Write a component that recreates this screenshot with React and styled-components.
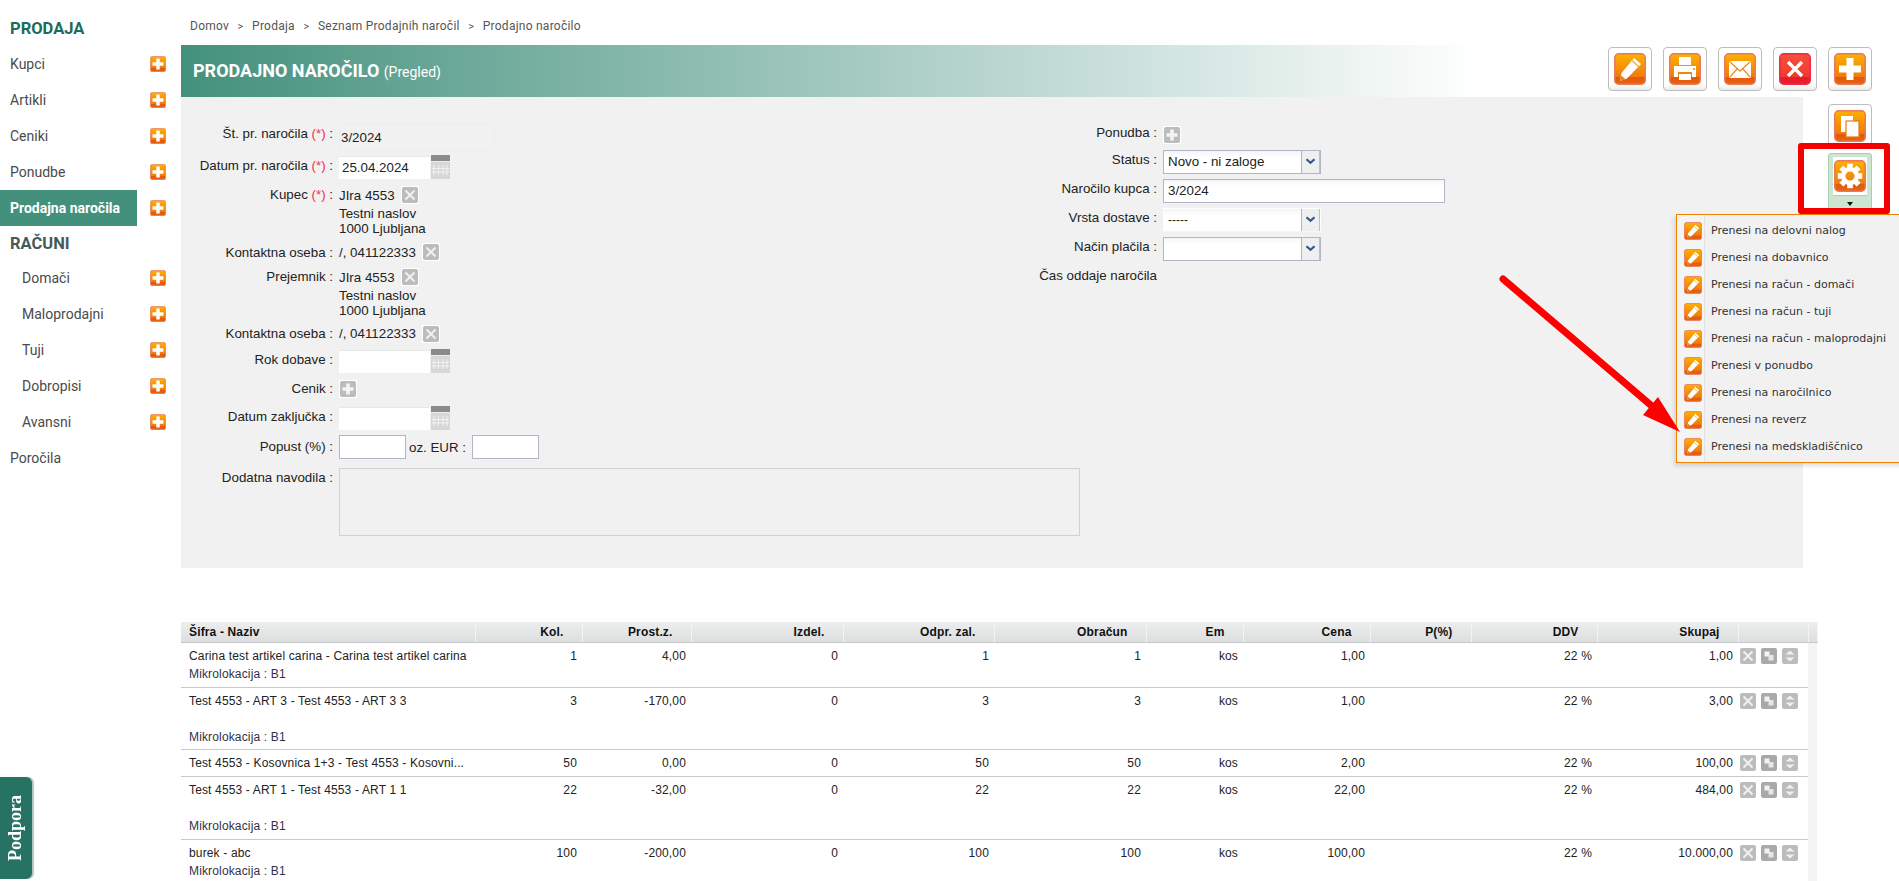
import { useId } from 'react';
import styled, { createGlobalStyle } from 'styled-components';

const GlobalStyle = createGlobalStyle`
  html, body {
    margin: 0;
    height: 100%;
    overflow: hidden;
    background: #fff;
  }
  body {
    font-family: "Liberation Sans", Arial, sans-serif;
    font-size: 12px;
    color: #222;
  }
`;

const glyphs = {
  pencil: (
    <>
      <path d="M20 5l7 6-14 14.500-7 2.500 1.500-8z" fill="#fff" />
      <path d="M18 7.500l6.500 6" stroke="#f3a63a" strokeWidth="1.300" fill="none" />
      <path d="M6 28l1.200-5.500 4.300 3.800z" fill="#e8821c" />
    </>
  ),
  print: (
    <>
      <rect x="10" y="4" width="12" height="8" fill="#fff" />
      <path d="M5 13h22v11h-4v-5H9v5H5z" fill="#fff" />
      <rect x="10" y="21" width="12" height="6" fill="#fff" />
      <rect x="24" y="15" width="2" height="2" fill="#f0a050" />
    </>
  ),
  mail: (
    <>
      <rect x="5" y="8" width="22" height="17" fill="#fff" />
      <path d="M5.500 8.500L16 18 26.500 8.500M5.500 24.500l7.500-8.500M26.500 24.500L19 16" stroke="#f0902a" strokeWidth="1.300" fill="none" />
    </>
  ),
  close: <path d="M9 9l14 14M23 9L9 23" stroke="#fff" strokeWidth="3.200" fill="none" />,
  plus: <path d="M12.500 5h7v7.500H27v7h-7.500V27h-7v-7.500H5v-7h7.500z" fill="#fff" />,
  copy: (
    <>
      <rect x="7" y="6" width="12" height="16" fill="#fff" />
      <rect x="12" y="11" width="13" height="16" fill="#fff" stroke="#e87a10" strokeWidth="1.200" />
    </>
  ),
  gear: (
    <>
      {[0, 45, 90, 135, 180, 225, 270, 315].map((angle) => (
        <rect key={angle} x="13.200" y="3.800" width="5.600" height="6" fill="#fff" transform={`rotate(${angle} 16 16)`} />
      ))}
      <circle cx="16" cy="16" r="6.800" fill="none" stroke="#fff" strokeWidth="4.500" />
    </>
  ),
};

const OrangeIcon = ({ glyph, size = 32, red }) => {
  const id = useId();
  return (
    <svg width={size} height={size} viewBox="0 0 32 32" style={{ display: 'block', flex: 'none' }}>
      <defs>
        <linearGradient id={id} x1="0" y1="0" x2="0" y2="1">
          <stop offset="0" stopColor={red ? '#f5503c' : '#ffb000'} />
          <stop offset="0.76" stopColor={red ? '#f03a2e' : '#f07a0c'} />
          <stop offset="0.77" stopColor={red ? '#e81c2c' : '#e2580c'} />
          <stop offset="1" stopColor={red ? '#e81c34' : '#e8640e'} />
        </linearGradient>
      </defs>
      <rect x="0.750" y="0.750" width="30.500" height="30.500" rx="4" fill={`url(#${id})`} stroke={red ? '#f02848' : '#e8795c'} strokeWidth="1.500" />
      {glyphs[glyph]}
    </svg>
  );
};

const GrayIcon = ({ kind }) => (
  <GrayBox>
    <svg width="16" height="16" viewBox="0 0 16 16" style={{ display: 'block' }}>
      <rect width="16" height="16" rx="2" fill={kind === 'copy' ? '#a9a9a9' : '#bcbcbc'} />
      {kind === 'x' && <path d="M3.500 3.500l9 9M12.500 3.500l-9 9" stroke="#f0f0f0" strokeWidth="2" />}
      {kind === 'plus' && <path d="M6.200 2.500h3.600v3.700h3.700v3.600H9.800v3.700H6.200V9.800H2.500V6.200h3.700z" fill="#f4f4f4" />}
      {kind === 'copy' && (
        <>
          <rect x="3.500" y="3.500" width="5" height="5" fill="#f4f4f4" />
          <rect x="7.500" y="7" width="5" height="5.500" fill="#e6e6e6" />
        </>
      )}
      {kind === 'sort' && (
        <>
          <path d="M8 2.500l4.500 4h-9zM8 13.500l-4.500-4h9z" fill="#f0f0f0" />
        </>
      )}
    </svg>
  </GrayBox>
);

const Calendar = () => (
  <CalendarBox>
    <svg width="19" height="24" viewBox="0 0 19 24" style={{ display: 'block' }}>
      <rect width="19" height="24" fill="#d6d8d6" />
      <rect width="19" height="6" fill="#8b8b8b" />
      <rect y="6" width="19" height="1" fill="#ededed" />
      <path d="M3 10v10M7.500 10v10M12 10v10M16 10v10M1 13.500h17M1 17h17" stroke="#f1f1f1" strokeWidth="1" />
    </svg>
  </CalendarBox>
);

const Chevron = () => (
  <SelectArrow>
    <svg width="11" height="7" viewBox="0 0 11 7">
      <path d="M1.500 1.200l4 3.600 4-3.600" fill="none" stroke="#34558f" strokeWidth="2.200" />
    </svg>
  </SelectArrow>
);

const salesLinks = [
  { label: 'Kupci' },
  { label: 'Artikli' },
  { label: 'Ceniki' },
  { label: 'Ponudbe' },
  { label: 'Prodajna naročila', active: true },
];
const invoiceLinks = ['Domači', 'Maloprodajni', 'Tuji', 'Dobropisi', 'Avansni'];

const transferItems = [
  'Prenesi na delovni nalog',
  'Prenesi na dobavnico',
  'Prenesi na račun - domači',
  'Prenesi na račun - tuji',
  'Prenesi na račun - maloprodajni',
  'Prenesi v ponudbo',
  'Prenesi na naročilnico',
  'Prenesi na reverz',
  'Prenesi na medskladiščnico',
];

const columns = [
  { label: 'Šifra - Naziv', width: 294, left: true },
  { label: 'Kol.', width: 107 },
  { label: 'Prost.z.', width: 109 },
  { label: 'Izdel.', width: 152 },
  { label: 'Odpr. zal.', width: 151 },
  { label: 'Obračun', width: 152 },
  { label: 'Em', width: 97 },
  { label: 'Cena', width: 127 },
  { label: 'P(%)', width: 101 },
  { label: 'DDV', width: 126 },
  { label: 'Skupaj', width: 141 },
];

const rows = [
  { name: 'Carina test artikel carina - Carina test artikel carina', gap: false, cells: ['1', '4,00', '0', '1', '1', 'kos', '1,00', '', '22 %', '1,00'], height: 45 },
  { name: 'Test 4553 - ART 3 - Test 4553 - ART 3 3', gap: true, cells: ['3', '-170,00', '0', '3', '3', 'kos', '1,00', '', '22 %', '3,00'], height: 62 },
  { name: 'Test 4553 - Kosovnica 1+3 - Test 4553 - Kosovni...', single: true, cells: ['50', '0,00', '0', '50', '50', 'kos', '2,00', '', '22 %', '100,00'], height: 27 },
  { name: 'Test 4553 - ART 1 - Test 4553 - ART 1 1', gap: true, cells: ['22', '-32,00', '0', '22', '22', 'kos', '22,00', '', '22 %', '484,00'], height: 63 },
  { name: 'burek - abc', gap: false, cells: ['100', '-200,00', '0', '100', '100', 'kos', '100,00', '', '22 %', '10.000,00'], height: 45 },
];

const App = () => (
  <Page>
    <GlobalStyle />
    <Sidebar>
      <SideHeading>PRODAJA</SideHeading>
      {salesLinks.map((link) => (
        <SideRow key={link.label}>
          <SideLink $active={link.active}>{link.label}</SideLink>
          <OrangeIcon glyph="plus" size={16} />
        </SideRow>
      ))}
      <SideHeading $muted>RAČUNI</SideHeading>
      {invoiceLinks.map((label) => (
        <SideRow key={label}>
          <SideLink $nested>{label}</SideLink>
          <OrangeIcon glyph="plus" size={16} />
        </SideRow>
      ))}
      <SideRow>
        <SideLink>Poročila</SideLink>
      </SideRow>
    </Sidebar>

    <Main>
      <Breadcrumb>
        <span>Domov</span>
        <Sep>&gt;</Sep>
        <span>Prodaja</span>
        <Sep>&gt;</Sep>
        <span>Seznam Prodajnih naročil</span>
        <Sep>&gt;</Sep>
        <span>Prodajno naročilo</span>
      </Breadcrumb>

      <TitleBar>
        <Title>
          PRODAJNO NAROČILO <small>(Pregled)</small>
        </Title>
        <Toolbar>
          <ToolButton><OrangeIcon glyph="pencil" /></ToolButton>
          <ToolButton><OrangeIcon glyph="print" /></ToolButton>
          <ToolButton><OrangeIcon glyph="mail" /></ToolButton>
          <ToolButton><OrangeIcon glyph="close" red /></ToolButton>
          <ToolButton><OrangeIcon glyph="plus" /></ToolButton>
        </Toolbar>
      </TitleBar>

      <Middle>
        <Panel>
          <FormLeft>
            <FormRow $h={30}>
              <Label $lift={8}>Št. pr. naročila <Req>(*)</Req> :</Label>
              <StaticValue>3/2024</StaticValue>
            </FormRow>
            <FormRow $h={30}>
              <Label $lift={4}>Datum pr. naročila <Req>(*)</Req> :</Label>
              <DateField><DateInput readOnly value="25.04.2024" /><Calendar /></DateField>
            </FormRow>
            <FormRow $h={58} $top>
              <Label $drop={5}>Kupec <Req>(*)</Req> :</Label>
              <Address>
                <AddressLine>JIra 4553 <GrayIcon kind="x" /></AddressLine>
                <div>Testni naslov</div>
                <div>1000 Ljubljana</div>
              </Address>
            </FormRow>
            <FormRow $h={24}>
              <Label>Kontaktna oseba :</Label>
              <AddressLine>/, 041122333 <GrayIcon kind="x" /></AddressLine>
            </FormRow>
            <FormRow $h={57} $top>
              <Label $drop={5}>Prejemnik :</Label>
              <Address>
                <AddressLine>JIra 4553 <GrayIcon kind="x" /></AddressLine>
                <div>Testni naslov</div>
                <div>1000 Ljubljana</div>
              </Address>
            </FormRow>
            <FormRow $h={25}>
              <Label>Kontaktna oseba :</Label>
              <AddressLine>/, 041122333 <GrayIcon kind="x" /></AddressLine>
            </FormRow>
            <FormRow $h={30}>
              <Label $lift={4}>Rok dobave :</Label>
              <DateField><DateInput readOnly value="" /><Calendar /></DateField>
            </FormRow>
            <FormRow $h={26}>
              <Label $lift={2}>Cenik :</Label>
              <GrayIcon kind="plus" />
            </FormRow>
            <FormRow $h={32}>
              <Label $lift={4}>Datum zaključka :</Label>
              <DateField><DateInput readOnly value="" /><Calendar /></DateField>
            </FormRow>
            <FormRow $h={26}>
              <Label $lift={2}>Popust (%) :</Label>
              <SmallInput readOnly value="" />
              <InlineText>oz. EUR :</InlineText>
              <SmallInput readOnly value="" />
            </FormRow>
            <NotesRow>
              <Label $drop={2}>Dodatna navodila :</Label>
              <Notes readOnly value="" />
            </NotesRow>
          </FormLeft>

          <FormRight>
            <RightRow $h={25}>
              <RightLabel>Ponudba :</RightLabel>
              <GrayIcon kind="plus" />
            </RightRow>
            <RightRow $h={29}>
              <RightLabel>Status :</RightLabel>
              <SelectBox>Novo - ni zaloge<Chevron /></SelectBox>
            </RightRow>
            <RightRow $h={29}>
              <RightLabel>Naročilo kupca :</RightLabel>
              <WideInput readOnly value="3/2024" />
            </RightRow>
            <RightRow $h={29}>
              <RightLabel>Vrsta dostave :</RightLabel>
              <SelectBox $plain>-----<Chevron /></SelectBox>
            </RightRow>
            <RightRow $h={29}>
              <RightLabel>Način plačila :</RightLabel>
              <SelectBox><Chevron /></SelectBox>
            </RightRow>
            <RightRow $h={29}>
              <RightLabel>Čas oddaje naročila</RightLabel>
            </RightRow>
          </FormRight>
        </Panel>

        <Actions>
          <ToolButton><OrangeIcon glyph="copy" /></ToolButton>
          <GearButton>
            <GearFace><OrangeIcon glyph="gear" /></GearFace>
            <GearCaret />
          </GearButton>
          <RedFrame />
          <TransferMenu>
            {transferItems.map((item) => (
              <TransferItem key={item}>
                <OrangeIcon glyph="pencil" size={18} />
                <span>{item}</span>
              </TransferItem>
            ))}
          </TransferMenu>
        </Actions>
      </Middle>

      <Items>
        <colgroup>
          {columns.map((col) => (
            <col key={col.label} style={{ width: col.width }} />
          ))}
          <col style={{ width: 70 }} />
          <col style={{ width: 9 }} />
        </colgroup>
        <thead>
          <tr>
            {columns.map((col) => (
              <Th key={col.label} $left={col.left}>{col.label}</Th>
            ))}
            <Th />
            <Th />
          </tr>
        </thead>
        <tbody>
          {rows.map((row) => (
            <tr key={row.name} style={{ height: row.height }}>
              <NameCell>
                <div>{row.name}</div>
                {row.gap && <Spacer />}
                {!row.single && <Micro>Mikrolokacija : B1</Micro>}
              </NameCell>
              {row.cells.map((cell, i) => (
                <Td key={i}>{cell}</Td>
              ))}
              <IconCell>
                <IconGroup>
                  <GrayIcon kind="x" />
                  <GrayIcon kind="copy" />
                  <GrayIcon kind="sort" />
                </IconGroup>
              </IconCell>
              <ScrollCell />
            </tr>
          ))}
        </tbody>
      </Items>
    </Main>

    <Arrow width="200" height="175" viewBox="0 0 200 175">
      <line x1="6" y1="7" x2="156" y2="135" stroke="#fe0000" strokeWidth="7" strokeLinecap="round" />
      <path d="M183 160l-37-17 15-18z" fill="#fe0000" />
    </Arrow>

    <SupportTab>Podpora</SupportTab>
  </Page>
);

const Page = styled.div`
  display: flex;
  align-items: flex-start;
  min-height: 881px;
  width: 1899px;
`;

const Sidebar = styled.nav`
  width: 181px;
  flex: none;
  padding-top: 11px;
  box-sizing: border-box;
  font-family: Roboto, sans-serif;
  font-size: 14px;
`;

const SideHeading = styled.div`
  height: ${({ $muted }) => ($muted ? '34px' : '35px')};
  line-height: ${({ $muted }) => ($muted ? '36px' : '35px')};
  padding-left: 10px;
  font-weight: 700;
  font-size: 16.500px;
  color: ${({ $muted }) => ($muted ? '#465a5a' : '#1c6b5b')};
`;

const SideRow = styled.div`
  height: 36px;
  display: flex;
  align-items: center;
  gap: 13px;
`;

const SideLink = styled.a`
  width: 137px;
  height: 36px;
  line-height: 36px;
  box-sizing: border-box;
  padding-left: ${({ $nested }) => ($nested ? '22px' : '10px')};
  color: ${({ $active }) => ($active ? '#fff' : '#4a4a4a')};
  font-weight: ${({ $active }) => ($active ? 700 : 400)};
  background: ${({ $active }) => ($active ? '#43917d' : 'transparent')};
`;

const Main = styled.main`
  flex: 1;
  min-width: 0;
`;

const Breadcrumb = styled.div`
  height: 45px;
  line-height: 53px;
  padding-left: 9px;
  box-sizing: border-box;
  font-family: Roboto, sans-serif;
  font-size: 12px;
  letter-spacing: 0.25px;
  color: #555;
  white-space: nowrap;
`;

const Sep = styled.span`
  margin: 0 8.500px;
  font-size: 11px;
`;

const TitleBar = styled.header`
  height: 52px;
  display: flex;
  align-items: flex-start;
  justify-content: space-between;
  padding-right: 27px;
  background: linear-gradient(to right, #43917d 0, #fff 75.600%);
`;

const Title = styled.h1`
  margin: 0;
  padding-left: 12px;
  line-height: 52px;
  font-family: Roboto, sans-serif;
  font-size: 18px;
  font-weight: 700;
  color: #fff;

  small {
    font-size: 14px;
    font-weight: 400;
  }
`;

const Toolbar = styled.div`
  display: flex;
  gap: 11px;
  padding-top: 2px;
`;

const ToolButton = styled.button`
  width: 44px;
  height: 44px;
  padding: 0;
  display: flex;
  align-items: center;
  justify-content: center;
  box-sizing: border-box;
  border: 1px solid #bdbdbd;
  border-radius: 4px;
  background: linear-gradient(#fff 85%, #ecece8);
`;

const Middle = styled.div`
  display: flex;
  align-items: flex-start;
`;

const Panel = styled.section`
  width: 1622px;
  height: 471px;
  flex: none;
  display: flex;
  box-sizing: border-box;
  padding-top: 25px;
  background: #f1f1f1;
  color: #222;
  font-size: 13.330px;
`;

const FormLeft = styled.div`
  width: 819px;
  flex: none;
`;

const FormRow = styled.div`
  height: ${({ $h }) => $h}px;
  display: flex;
  align-items: ${({ $top }) => ($top ? 'flex-start' : 'center')};
`;

const NotesRow = styled.div`
  display: flex;
  align-items: flex-start;
  padding-top: 8px;
`;

const Label = styled.label`
  width: 152px;
  flex: none;
  margin-right: 6px;
  box-sizing: content-box;
  padding-bottom: ${({ $lift }) => $lift || 0}px;
  padding-top: ${({ $drop }) => $drop || 0}px;
  text-align: right;
  white-space: nowrap;
`;

const Req = styled.span`
  color: #f0304a;
`;

const StaticValue = styled.div`
  width: 155px;
  height: 28px;
  line-height: 27px;
  box-sizing: border-box;
  border: 1px solid #ededed;
  margin-left: 1px;
`;

const DateField = styled.div`
  display: flex;
  align-items: center;
`;

const DateInput = styled.input`
  width: 91px;
  height: 23px;
  box-sizing: border-box;
  padding: 0 3px;
  border: 0;
  border-top: 1px solid #e4e8e6;
  background: #fff;
  font: 13.330px "Liberation Sans", sans-serif;
  color: #222;
`;

const CalendarBox = styled.span`
  margin-left: 1px;
`;

const GrayBox = styled.span`
  display: inline-block;
  padding: 1px;
  background: #fff;
  flex: none;
`;

const Address = styled.div`
  padding-top: 4px;
  line-height: 15px;
`;

const AddressLine = styled.div`
  display: flex;
  align-items: center;
  gap: 6px;
  min-height: 18px;

  ${Address} & {
    margin-bottom: 1.500px;
  }
`;

const SmallInput = styled.input`
  width: 67px;
  height: 24px;
  box-sizing: border-box;
  border: 1px solid #b1b5c8;
  background: #fff;
`;

const InlineText = styled.span`
  margin: 0 6px 0 3px;
`;

const Notes = styled.textarea`
  width: 741px;
  height: 68px;
  flex: none;
  box-sizing: border-box;
  margin: 0;
  border: 1px solid #cfd2d3;
  background: #f1f1f1;
  resize: none;
`;

const FormRight = styled.div`
  flex: 1;
`;

const RightRow = styled.div`
  height: ${({ $h }) => $h}px;
  display: flex;
  align-items: center;
`;

const RightLabel = styled.label`
  width: 157px;
  margin-right: 6px;
  padding-bottom: 4px;
  flex: none;
  text-align: right;
  white-space: nowrap;
`;

const SelectBox = styled.div`
  width: 158px;
  height: 24px;
  line-height: 22px;
  display: flex;
  justify-content: space-between;
  box-sizing: border-box;
  padding-left: 4px;
  border: 1px solid ${({ $plain }) => ($plain ? 'transparent' : '#b1b5c8')};
  background: linear-gradient(#f4f6f5, #fff 30%);
  font-size: ${({ $plain }) => ($plain ? '12px' : '13.330px')};
`;

const SelectArrow = styled.span`
  margin-left: auto;
  width: 19px;
  flex: none;
  display: flex;
  align-items: center;
  justify-content: center;
  box-sizing: border-box;
  border-left: 1px solid #b1b5c8;
  border-right: 1px solid #9fd4b0;
  background: #eef0f0;
`;

const WideInput = styled.input`
  width: 282px;
  height: 24px;
  box-sizing: border-box;
  padding: 0 4px;
  border: 1px solid #b1b5c8;
  background: linear-gradient(#f4f6f5, #fff 30%);
  font: 13.330px "Liberation Sans", sans-serif;
  color: #222;
`;

const Actions = styled.aside`
  position: relative;
  display: flex;
  flex-direction: column;
  gap: 5px;
  margin-left: 25px;
  padding-top: 7px;
`;

const GearButton = styled.div`
  width: 44px;
  height: 57px;
  box-sizing: border-box;
  padding: 3px 4px 0;
  background: #cde6d2;
  border: 1px solid #a8cdb0;
  border-radius: 3px 3px 0 0;
`;

const GearFace = styled.div`
  height: 39px;
  display: flex;
  justify-content: center;
  background: #fff;
  border-bottom: 1px solid #a9c7e8;
  padding-top: 3px;
  box-sizing: border-box;
`;

const GearCaret = styled.div`
  width: 0;
  height: 0;
  margin: 6px auto 0;
  border: 3.500px solid transparent;
  border-top: 4px solid #111;
  border-bottom: 0;
`;

const RedFrame = styled.div`
  position: absolute;
  left: -30px;
  top: 46px;
  width: 92px;
  height: 71px;
  box-sizing: border-box;
  border: 6px solid #f50000;
  border-radius: 3px;
`;

const TransferMenu = styled.div`
  position: absolute;
  left: -152px;
  top: 117px;
  width: 240px;
  height: 249px;
  box-sizing: border-box;
  padding-top: 2px;
  border: 1px solid #f08200;
  background: linear-gradient(to right, #f4f4f4 27px, #e2e2e2 27px, #e2e2e2 28px, #f1f1f1 28px);
  box-shadow: -2px 3px 4px rgba(0, 0, 0, 0.12);
  z-index: 2;
`;

const TransferItem = styled.div`
  height: 27px;
  display: flex;
  align-items: center;
  padding-left: 7px;
  gap: 9px;
  font-family: "DejaVu Sans", sans-serif;
  font-size: 11px;
  color: #333;
  white-space: nowrap;
`;

const Items = styled.table`
  width: 1636px;
  margin-top: 54px;
  table-layout: fixed;
  border-collapse: collapse;
  font-size: 12px;
  letter-spacing: 0.150px;
  color: #222;
`;

const Th = styled.th`
  height: 20px;
  box-sizing: border-box;
  padding: 0 18px 0 ${({ $left }) => ($left ? '8px' : '0')};
  text-align: ${({ $left }) => ($left ? 'left' : 'right')};
  font-size: 12px;
  font-weight: 700;
  color: #111;
  background: linear-gradient(#eceeee, #dcdedf);
  border-bottom: 1px solid #c6c8c9;
  border-right: 1px solid #f4f4f4;
`;

const NameCell = styled.td`
  padding: 4px 4px 0 8px;
  vertical-align: top;
  line-height: 18px;
  border-bottom: 1px solid #c9c9c9;
`;

const Spacer = styled.div`
  height: 18px;
`;

const Micro = styled.div`
  color: #33304a;
`;

const Td = styled.td`
  padding: 4px 5px 0 0;
  line-height: 18px;
  vertical-align: top;
  text-align: right;
  border-bottom: 1px solid #c9c9c9;
`;

const IconCell = styled.td`
  padding: 4px 0 0 1px;
  vertical-align: top;
  border-bottom: 1px solid #c9c9c9;
`;

const IconGroup = styled.div`
  display: flex;
  gap: 3px;
`;

const ScrollCell = styled.td`
  background: #f4f4f4;
`;

const Arrow = styled.svg`
  position: absolute;
  left: 1497px;
  top: 272px;
  z-index: 3;
`;

const SupportTab = styled.div`
  position: fixed;
  left: 0;
  top: 777px;
  width: 32px;
  height: 102px;
  display: flex;
  align-items: center;
  justify-content: center;
  writing-mode: vertical-rl;
  transform: rotate(180deg);
  background: #267364;
  border-radius: 6px 0 0 6px;
  box-shadow: -2px 0 1px #b5c4c0;
  color: #fff;
  font-family: "Liberation Serif", serif;
  font-size: 18px;
  font-weight: 700;
`;

export default App;
